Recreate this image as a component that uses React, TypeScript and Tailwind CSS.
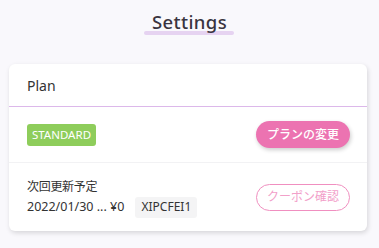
import React from 'react';

const font = { fontFamily: '"Noto Sans", "Noto Sans CJK JP", sans-serif' };

export default function App() {
  return (
    <div className="min-h-[248px] w-[379px] bg-[#f9f8fc] text-[#333]" style={font}>
      {/* Title */}
      <div className="flex h-[64px] justify-center pt-[9px]">
        <div className="relative">
          <h1 className="relative z-10 text-[18.5px] font-medium leading-[26px] tracking-[0.4px] text-[#3a3440]">Settings</h1>
          <div className="absolute left-[-8px] right-[-7px] top-[22px] h-[4px] rounded-full bg-[#e6d3f1]" />
        </div>
      </div>

      {/* Plan card */}
      <div className="ml-[9px] w-[358px] rounded-[6px] bg-white shadow-[1px_2px_5px_rgba(0,0,0,0.14)]">
        <div className="flex h-[43px] items-center border-b border-[#dcb8ea] px-[18px] text-[14px]">Plan</div>

        <div className="flex h-[56px] items-center justify-between border-b border-[#f2f2f4] pl-[18px] pr-[17px]">
          <span className="flex h-[22px] w-[69px] items-center justify-center rounded-[3px] bg-[#8ecd5b] text-[11.5px] text-white">STANDARD</span>
          <button className="flex h-[27px] w-[94px] items-center justify-center rounded-full bg-[#ec73b1] text-[12px] font-medium text-white shadow-[1px_2px_4px_rgba(0,0,0,0.2)]">
            プランの変更
          </button>
        </div>

        <div className="flex h-[68px] items-center justify-between pl-[18px] pr-[17px]">
          <div className="flex flex-col">
            <span className="text-[12px] leading-[20px] tracking-[-0.3px]">次回更新予定</span>
            <div className="flex items-center gap-[11px]">
              <span className="text-[12.5px] leading-[20px]">2022/01/30 ... ¥0</span>
              <span className="flex h-[21px] w-[62px] items-center justify-center rounded-[3px] bg-[#f4f4f5] text-[12px]">XIPCFEI1</span>
            </div>
          </div>
          <button className="flex h-[27px] w-[94px] items-center justify-center rounded-full border border-[#f08fc0] text-[12px] text-[#f2a0c9]">
            クーポン確認
          </button>
        </div>
      </div>
    </div>
  );
}
